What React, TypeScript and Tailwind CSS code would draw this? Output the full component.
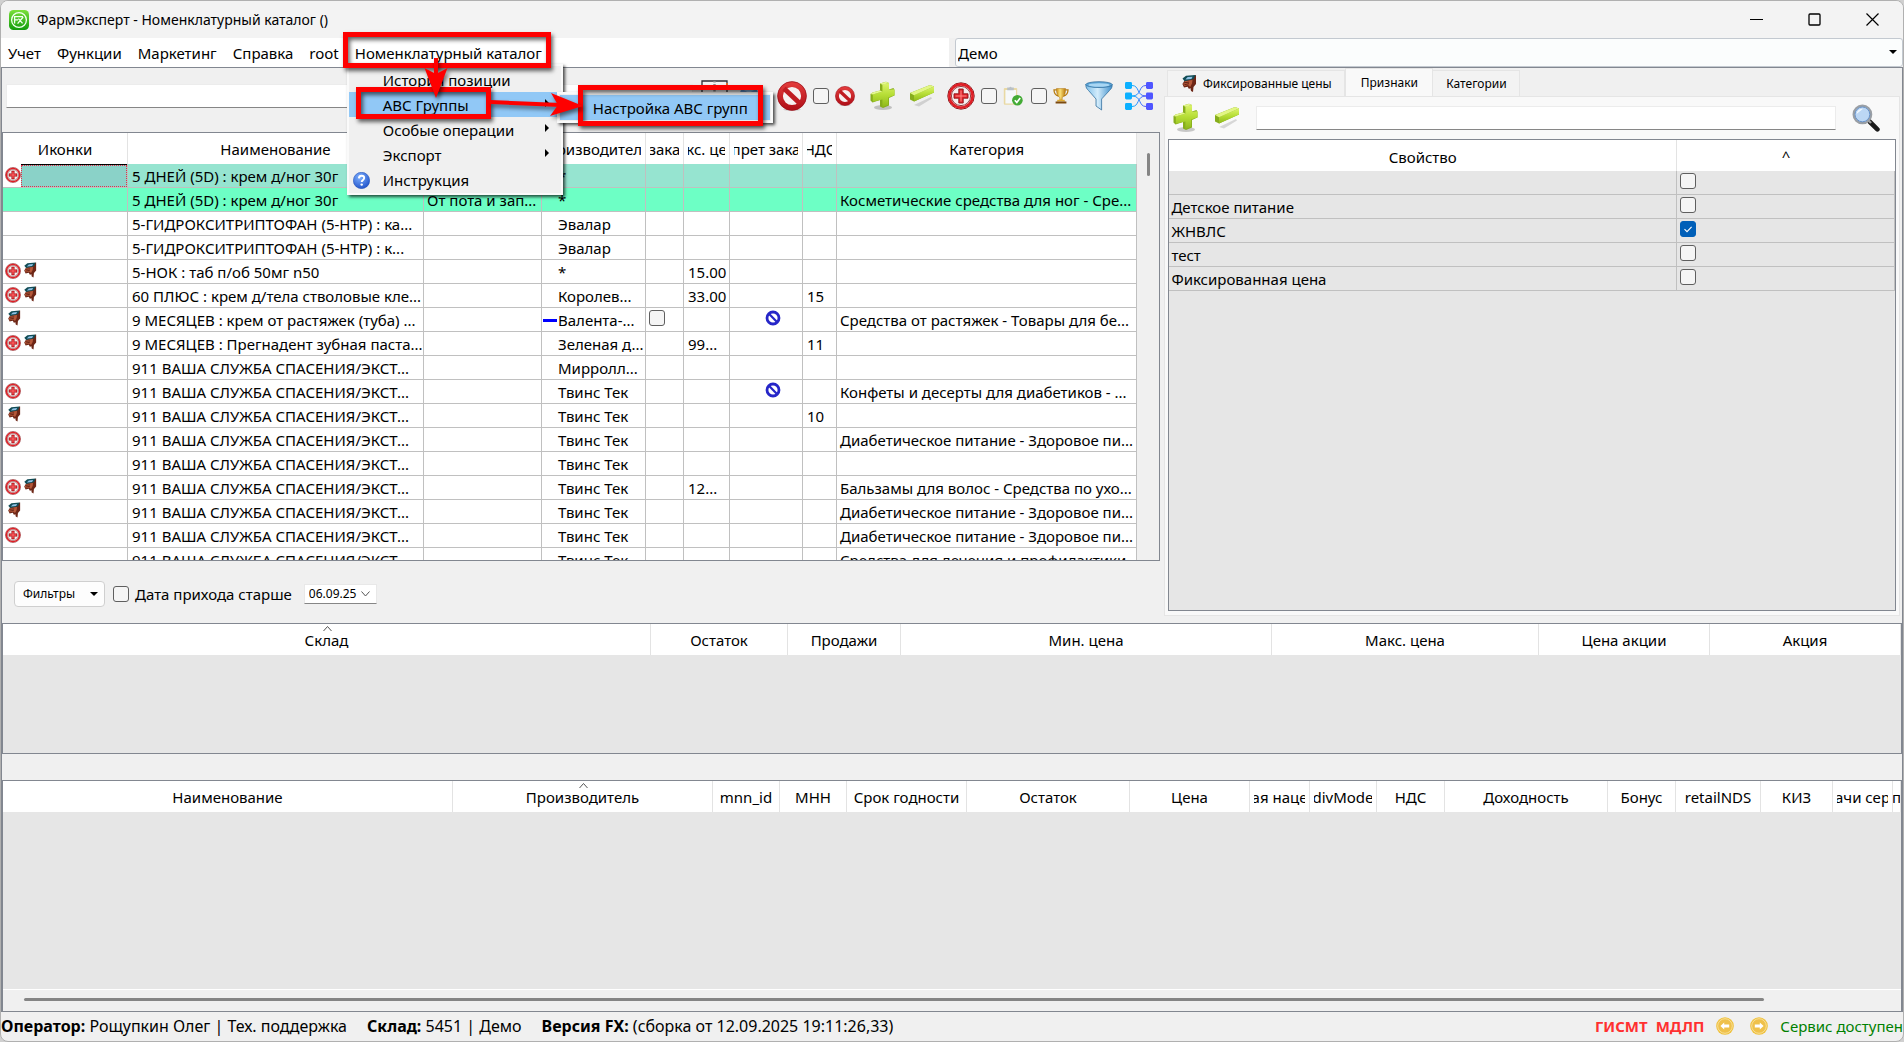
import type { ReactNode } from 'react';

function Defs() {
  return (
    <svg className="absolute h-0 w-0" aria-hidden="true">
      <defs>
        <linearGradient id="green" x1="0" y1="0" x2="0" y2="1">
          <stop offset="0" stopColor="#dcf46c" />
          <stop offset="0.5" stopColor="#b5dd35" />
          <stop offset="1" stopColor="#8fb81c" />
        </linearGradient>
        <linearGradient id="red" x1="0" y1="0" x2="0" y2="1">
          <stop offset="0" stopColor="#e0393a" />
          <stop offset="1" stopColor="#b3121a" />
        </linearGradient>
        <linearGradient id="logo" x1="0" y1="0" x2="0" y2="1">
          <stop offset="0" stopColor="#7be03a" />
          <stop offset="1" stopColor="#119c0c" />
        </linearGradient>
        <linearGradient id="gold" x1="0" y1="0" x2="1" y2="0">
          <stop offset="0" stopColor="#c98a12" />
          <stop offset="0.4" stopColor="#fbe27a" />
          <stop offset="1" stopColor="#b97708" />
        </linearGradient>
        <linearGradient id="blue" x1="0" y1="0" x2="1" y2="0">
          <stop offset="0" stopColor="#7fc0ea" />
          <stop offset="0.45" stopColor="#d3ecfb" />
          <stop offset="1" stopColor="#3f8fcb" />
        </linearGradient>
        <linearGradient id="tree" x1="0" y1="0" x2="1" y2="0">
          <stop offset="0" stopColor="#08b4ff" />
          <stop offset="1" stopColor="#5350ff" />
        </linearGradient>
        <radialGradient id="help" cx="0.4" cy="0.3" r="0.8">
          <stop offset="0" stopColor="#7fb2ff" />
          <stop offset="1" stopColor="#1749c4" />
        </radialGradient>
      </defs>
    </svg>
  );
}

const Logo = () => (
  <svg viewBox="0 0 20 20" className="size-5 shrink-0" aria-hidden="true">
    <rect width="20" height="20" rx="4.5" fill="url(#logo)" />
    <circle cx="10" cy="10" r="7.4" fill="none" stroke="#f2fff0" strokeWidth="1.3" />
    <path d="M5.6 13.6V6.6H10M5.6 9.8H9M8.6 13.6L14.2 7M9.4 8.6L13.6 13.4M8 6.6H14" fill="none" stroke="#f2fff0" strokeWidth="1.3" />
  </svg>
);

const NoEntry = ({ className }: { className: string }) => (
  <svg viewBox="0 0 30 30" className={className} aria-hidden="true">
    <ellipse cx="15" cy="28.6" rx="9" ry="1.2" fill="#0002" />
    <circle cx="15" cy="15" r="11.8" fill="#f6f1f1" stroke="url(#red)" strokeWidth="5.4" />
    <path d="M7 7.5L23 22.5" stroke="#c01c22" strokeWidth="5" />
    <circle cx="15" cy="15" r="14.4" fill="none" stroke="#96101a" strokeWidth="0.7" />
  </svg>
);

const Plus = () => (
  <svg viewBox="0 0 26 30" className="h-[30px] w-[26px] shrink-0" aria-hidden="true">
    <ellipse cx="14" cy="26.5" rx="9" ry="2.6" fill="#0003" />
    <path d="M11 2.5L17 0.8L20 2V8.5L24.5 7L25.5 9V14.5L20 17V24.5L14 27L11 25.5V19L3.5 21.5L1.5 19.5V13L3.5 11.5L11 9.5Z" fill="#86ad1c" />
    <path d="M13.4 3.6L20 2V8.8L25.5 8.2V14.2L19.2 16.6V24L13.4 26V18.4L3.8 20.8V13.4L13.4 10.4Z" fill="url(#green)" />
    <path d="M11 2.5L17 0.8L20 2L13.4 3.8ZM1.5 13L3.5 11.5L11 9.4L13.4 10.4L3.8 13.5Z" fill="#e4f78e" />
  </svg>
);

const Minus = () => (
  <svg viewBox="0 0 26 24" className="h-6 w-[26px] shrink-0" aria-hidden="true">
    <path d="M5 21L22 13L23 14.5L10 22.5Z" fill="#0002" />
    <path d="M1 9L21 1L25 2.5V8.5L5 17.5L1 15.5Z" fill="#86ad1c" />
    <path d="M5 11.2L25 2.5V8.5L5 17.5Z" fill="url(#green)" />
    <path d="M1 9L21 1L25 2.5L5 11.2Z" fill="#e2f684" />
  </svg>
);

const Med = ({ className }: { className: string }) => (
  <svg viewBox="0 0 28 28" className={className} aria-hidden="true">
    <circle cx="14" cy="14" r="13.2" fill="#fff" stroke="#7e1417" strokeWidth="1" />
    <circle cx="14" cy="14" r="11.6" fill="#f5e2e2" stroke="#df1f26" strokeWidth="2.6" />
    <circle cx="14" cy="14" r="9.6" fill="#f4f0f0" stroke="#7e1417" strokeWidth="0.8" />
    <path d="M11.8 7H16.2V11.8H21V16.2H16.2V21H11.8V16.2H7V11.8H11.8Z" fill="#e3242b" stroke="#8f1518" strokeWidth="0.9" />
    <path d="M14 8.5V19.5M8.5 14H19.5" stroke="#ff8d8a" strokeWidth="1" />
  </svg>
);

const Hand = ({ className }: { className: string }) => (
  <svg viewBox="0 0 16 18" className={className} aria-hidden="true">
    <path d="M11.5 1.5L15 0.5V9.5L12.5 12.5L12 17.5L10 16.5L9.4 13.5L8 14.6L6.6 12.2L3 13L1.4 9.6L3.6 6Z" fill="#6d2616" />
    <path d="M4 6.5L11.5 5.5L11 9L9.2 12.4L7 10.6L3.4 11.6L2.2 9.6Z" fill="#b6593a" />
    <path d="M3 8.3L8.2 7.6M3.4 10.2L8 9.2" stroke="#5a1c10" strokeWidth="0.9" />
    <path d="M1.5 4L5 1.2L14.6 0.4L12.6 4.6L3.6 6.8Z" fill="#114c55" />
    <path d="M4.4 5L6.6 2.6L11.6 2.2L10.4 4.4Z" fill="#8fc1e6" />
  </svg>
);

const Trophy = () => (
  <svg viewBox="0 0 16 16" className="size-4 shrink-0" aria-hidden="true">
    <path d="M3.5 1.8H1C1 5.4 2.4 7.4 5.4 8M12.5 1.8H15C15 5.4 13.6 7.4 10.6 8" fill="none" stroke="#b77c10" strokeWidth="1.3" />
    <path d="M3.4 0.6H12.6C12.6 5 11.6 8.4 9.2 9.6V12H6.8V9.6C4.4 8.4 3.4 5 3.4 0.6Z" fill="url(#gold)" stroke="#a86c08" strokeWidth="0.5" />
    <path d="M4.4 11.8H11.6L12 13.6H4Z" fill="#e0ac32" />
    <path d="M2.6 13.4H13.4V15.6H2.6Z" fill="#7c4a10" />
  </svg>
);

const Clipboard = () => (
  <svg viewBox="0 0 20 20" className="size-5 shrink-0" aria-hidden="true">
    <rect x="0.8" y="2" width="13.4" height="16.8" rx="1" fill="#e9d9a4" />
    <path d="M2.4 4H13V15L10.6 17.4H2.4Z" fill="#f6f8fa" />
    <path d="M4.2 1.6H6.4C6.6 0.4 8.4 0.4 8.6 1.6H10.8V4.2H4.2Z" fill="#b9c0c6" />
    <circle cx="14.4" cy="14.2" r="5.3" fill="#43ab35" />
    <path d="M11.8 14.2L13.8 16.4L17.2 12" fill="none" stroke="#fff" strokeWidth="1.7" />
  </svg>
);

const Funnel = () => (
  <svg viewBox="0 0 28 30" className="h-[30px] w-7 shrink-0" aria-hidden="true">
    <path d="M0.8 3.5C0.8 7 2 8 3.6 9.6L11 18V25L16.6 29V18L24.4 9.6C26 8 27.2 7 27.2 3.5Z" fill="url(#blue)" stroke="#35719f" strokeWidth="0.8" />
    <ellipse cx="14" cy="3.6" rx="13.2" ry="2.9" fill="#5da6d8" stroke="#35719f" strokeWidth="0.8" />
    <ellipse cx="14" cy="4" rx="10.6" ry="1.8" fill="#a9d6f3" />
  </svg>
);

const Tree = () => (
  <svg viewBox="0 0 28 28" className="size-7 shrink-0" aria-hidden="true">
    <path d="M7 3.5C15 3.5 11 14 21 14M7 24.5C15 24.5 11 14 21 14M21 3.5C13 3.5 17 14 7 14M21 24.5C13 24.5 17 14 7 14" fill="none" stroke="url(#tree)" strokeWidth="1" />
    {[0, 10.5, 21].map((y) => (
      <g key={y}>
        <rect x="0" y={y} width="7" height="7" rx="1.4" fill="#0bb0ff" />
        <rect x="21" y={y} width="7" height="7" rx="1.4" fill="#4f55ff" />
      </g>
    ))}
  </svg>
);

const Book = () => (
  <svg viewBox="0 0 28 28" className="size-7 shrink-0" aria-hidden="true">
    <path d="M1 1H26V26H1Z" fill="#f4f4f4" stroke="#2c2c34" strokeWidth="1.3" />
    <path d="M26 3V8" stroke="#e0672a" strokeWidth="2" />
    <path d="M13.5 1V26" stroke="#8b8b8b" strokeWidth="2.4" strokeDasharray="1.5 1.5" />
  </svg>
);

const Person = () => (
  <svg viewBox="0 0 28 28" className="size-7 shrink-0" aria-hidden="true">
    <circle cx="12" cy="12" r="9" fill="#5f92c9" />
    <path d="M5 7C8 2 16 2 19 7L12 11Z" fill="#8db7e0" />
  </svg>
);

const Magnifier = () => (
  <svg viewBox="0 0 28 28" className="size-7 shrink-0" aria-hidden="true">
    <path d="M17.5 17.5L25.4 25.4" stroke="#1b1b1b" strokeWidth="4.6" strokeLinecap="round" />
    <path d="M16 16L19 19" stroke="#9c9c9c" strokeWidth="2.4" />
    <circle cx="10.4" cy="10.4" r="8.8" fill="#cfe3f7" stroke="#9a9fa5" strokeWidth="2.2" />
    <circle cx="10.4" cy="10.4" r="7.4" fill="#bcd7f4" stroke="#4f7fbd" strokeWidth="0.8" />
    <path d="M4.6 10C5 6.4 8 4.6 11 4.8C9 6.6 7 8 4.6 10Z" fill="#f2f8fe" />
  </svg>
);

const HelpBall = () => (
  <svg viewBox="0 0 17 17" className="size-[17px]" aria-hidden="true">
    <circle cx="8.5" cy="8.5" r="8.2" fill="url(#help)" stroke="#1c4db5" strokeWidth="0.5" />
    <path d="M5.9 6.4C6 4.6 7.2 3.8 8.6 3.8C10.1 3.8 11.2 4.7 11.2 6.1C11.2 7.9 8.7 7.9 8.7 10" fill="none" stroke="#fff" strokeWidth="1.9" />
    <circle cx="8.7" cy="12.6" r="1.2" fill="#fff" />
  </svg>
);

const Ban = () => (
  <svg viewBox="0 0 16 16" className="size-4" aria-hidden="true">
    <circle cx="8" cy="8" r="6" fill="#fff" stroke="#2626c8" strokeWidth="2.8" />
    <path d="M4.2 4L12 12" stroke="#2626c8" strokeWidth="2.2" />
  </svg>
);

const ArrowBall = ({ flip = false }: { flip?: boolean }) => (
  <svg viewBox="0 0 18 18" className="size-[18px] shrink-0" aria-hidden="true">
    <circle cx="9" cy="9" r="8.8" fill="#efc03a" />
    <circle cx="9" cy="9" r="7.3" fill="#efc14a" stroke="#f8e2a0" strokeWidth="0.9" />
    <path
      d={flip ? 'M13.6 9L9.8 5.6V7.6H4.8V10.4H9.8V12.4Z' : 'M4.4 9L8.2 5.6V7.6H13.2V10.4H8.2V12.4Z'}
      fill="#fff"
    />
  </svg>
);

const Caret = ({ className = '' }: { className?: string }) => (
  <svg viewBox="0 0 8 4" className={'h-1 w-2 ' + className} aria-hidden="true">
    <path d="M0 0H8L4 4Z" fill="#000" />
  </svg>
);

const SubArrow = () => (
  <svg viewBox="0 0 4 8" className="mb-1 h-2 w-1" aria-hidden="true">
    <path d="M0 0L4 4L0 8Z" fill="#000" />
  </svg>
);

const SortMark = () => (
  <svg viewBox="0 0 9 5" className="absolute top-0.5 left-1/2 -ml-1 h-[5px] w-[9px]" aria-hidden="true">
    <path d="M0.5 5L4.5 0.5L8.5 5" fill="none" stroke="#555" />
  </svg>
);

function Check({ label, checked = false }: { label: string; checked?: boolean }) {
  return (
    <span className="relative block size-4 shrink-0">
      <input
        type="checkbox"
        aria-label={label}
        defaultChecked={checked}
        className="peer block size-4 appearance-none rounded-[3px] border border-[#5f5f5f] bg-[#f5f5f5] checked:border-[#005fb8] checked:bg-[#005fb8]"
      />
      <svg viewBox="0 0 16 16" className="pointer-events-none absolute inset-0 hidden size-4 peer-checked:block" aria-hidden="true">
        <path d="M4.5 8.2L7 10.6L11.6 5.8" fill="none" stroke="#fff" strokeWidth="1.1" />
      </svg>
    </span>
  );
}

const IconButton = ({ label, className = '', children }: { label: string; className?: string; children: ReactNode }) => (
  <button type="button" aria-label={label} className={'shrink-0 ' + className}>
    {children}
  </button>
);

type Row = {
  icons?: string;
  name: string;
  desc?: string;
  maker: string;
  dash?: boolean;
  box?: boolean;
  price?: string;
  ban?: boolean;
  vat?: string;
  category?: string;
};

const rescue = '911 ВАША СЛУЖБА СПАСЕНИЯ/ЭКСТ...';
const diabetic = 'Диабетическое питание - Здоровое пи...';

const rows: Row[] = [
  { icons: 'm', name: '5 ДНЕЙ (5D) : крем д/ног 30г', maker: '*' },
  { name: '5 ДНЕЙ (5D) : крем д/ног 30г', desc: 'От пота и зап...', maker: '*', category: 'Косметические средства для ног - Сре...' },
  { name: '5-ГИДРОКСИТРИПТОФАН (5-HTP) : ка...', maker: 'Эвалар' },
  { name: '5-ГИДРОКСИТРИПТОФАН (5-HTP) : к...', maker: 'Эвалар' },
  { icons: 'mh', name: '5-НОК : таб п/об 50мг n50', maker: '*', price: '15.00' },
  { icons: 'mh', name: '60 ПЛЮС : крем д/тела стволовые кле...', maker: 'Королев...', price: '33.00', vat: '15' },
  { icons: 'h', name: '9 МЕСЯЦЕВ : крем от растяжек (туба) ...', maker: 'Валента-...', dash: true, box: true, ban: true, category: 'Средства от растяжек - Товары для бе...' },
  { icons: 'mh', name: '9 МЕСЯЦЕВ : Прегнадент зубная паста...', maker: 'Зеленая д...', price: '99...', vat: '11' },
  { name: rescue, maker: 'Мирролл...' },
  { icons: 'm', name: rescue, maker: 'Твинс Тек', ban: true, category: 'Конфеты и десерты для диабетиков - ...' },
  { icons: 'h', name: rescue, maker: 'Твинс Тек', vat: '10' },
  { icons: 'm', name: rescue, maker: 'Твинс Тек', category: diabetic },
  { name: rescue, maker: 'Твинс Тек' },
  { icons: 'mh', name: rescue, maker: 'Твинс Тек', price: '12...', category: 'Бальзамы для волос - Средства по ухо...' },
  { icons: 'h', name: rescue, maker: 'Твинс Тек', category: diabetic },
  { icons: 'm', name: rescue, maker: 'Твинс Тек', category: diabetic },
  { name: rescue, maker: 'Твинс Тек', category: 'Средства для лечения и профилактики...' },
];

type Column = { title: string; width?: string; sorted?: boolean; narrow?: boolean };

const catalogColumns: Column[] = [
  { title: 'Иконки', width: 'w-[125px]' },
  { title: 'Наименование', width: 'w-[296px]' },
  { title: '', width: 'w-[118px]' },
  { title: 'Производитель', width: 'w-[104px]' },
  { title: 'зака', width: 'w-[38px]' },
  { title: 'кс. це', width: 'w-[46px]' },
  { title: 'прет зака', width: 'w-[73px]' },
  { title: 'НДС', width: 'w-[34px]' },
  { title: 'Категория' },
];

const stockColumns: Column[] = [
  { title: 'Склад', sorted: true },
  { title: 'Остаток', width: 'w-[137px]' },
  { title: 'Продажи', width: 'w-[113px]' },
  { title: 'Мин. цена', width: 'w-[371px]' },
  { title: 'Макс. цена', width: 'w-[267px]' },
  { title: 'Цена акции', width: 'w-[171px]' },
  { title: 'Акция', width: 'w-[191px]' },
];

const batchColumns: Column[] = [
  { title: 'Наименование' },
  { title: 'Производитель', width: 'w-[260px]', sorted: true },
  { title: 'mnn_id', width: 'w-[67px]' },
  { title: 'МНН', width: 'w-[67px]' },
  { title: 'Срок годности', width: 'w-[120px]' },
  { title: 'Остаток', width: 'w-[163px]' },
  { title: 'Цена', width: 'w-[120px]' },
  { title: 'ая наце', width: 'w-[60px]' },
  { title: 'divMode', width: 'w-[67px]' },
  { title: 'НДС', width: 'w-[68px]' },
  { title: 'Доходность', width: 'w-[163px]' },
  { title: 'Бонус', width: 'w-[68px]' },
  { title: 'retailNDS', width: 'w-[85px]' },
  { title: 'КИЗ', width: 'w-[72px]' },
  { title: 'ачи сер', width: 'w-[60px]' },
  { title: 'п', width: 'w-2', narrow: true },
];

function HeaderRow({ columns }: { columns: Column[] }) {
  return (
    <thead>
      <tr className="h-[31px] bg-white">
        {columns.map((c, i) => (
          <th key={i} scope="col" className={'relative border-r border-[#e3e3e3] p-0 font-normal ' + (c.width ?? '')}>
            {c.sorted && <SortMark />}
            <span className={'flex justify-center overflow-hidden pt-px leading-6 whitespace-nowrap ' + (c.narrow ? '' : 'mx-1')}>
              <span className="shrink-0">{c.title}</span>
            </span>
          </th>
        ))}
      </tr>
    </thead>
  );
}

const cell = 'h-6 overflow-hidden border-r border-b border-[#c0c0c0] p-0 leading-[22px] whitespace-nowrap';

function Catalog() {
  return (
    <div className="flex h-[429px] border border-[#828790] bg-[#f0f0f0]">
      <div className="min-w-0 flex-1 overflow-hidden bg-white">
        <table className="w-full table-fixed border-separate border-spacing-0">
          <HeaderRow columns={catalogColumns} />
          <tbody>
            {rows.map((r, i) => (
              <tr key={i} className={i === 0 ? 'bg-[#96e4d0]' : i === 1 ? 'bg-[#6dffc5]' : 'bg-white'}>
                <td className={cell + (i === 0 ? ' bg-white' : '')}>
                  <div className="flex h-[23px] items-center pl-0.5">
                    {r.icons?.includes('m') && <Med className="mb-0.5 size-4 shrink-0" />}
                    {r.icons?.includes('h') && <Hand className="mb-1 ml-0.5 h-4 w-[14px] shrink-0" />}
                    {i === 0 && (
                      <span className="h-full flex-1 border-t border-black bg-[#8ad2c8]">
                        <span className="block h-full border border-dotted border-[#e0304a]" />
                      </span>
                    )}
                  </div>
                </td>
                <td className={cell + ' pt-px pl-1'}>{r.name}</td>
                <td className={cell + ' pt-px pl-[3px]'}>{r.desc}</td>
                <td className={cell + ' pt-px'}>
                  <div className="flex items-center">
                    <span className={'mr-px ml-px h-[3px] w-[14px] shrink-0 ' + (r.dash ? 'bg-[#0000ff]' : '')} />
                    {r.maker}
                  </div>
                </td>
                <td className={cell}>
                  {r.box && (
                    <span className="block pb-1 pl-[3px]">
                      <Check label="Дозаказ" />
                    </span>
                  )}
                </td>
                <td className={cell + ' pt-px pl-1'}>{r.price}</td>
                <td className={cell}>
                  {r.ban && (
                    <span className="flex justify-center pb-1 pl-3.5">
                      <Ban />
                    </span>
                  )}
                </td>
                <td className={cell + ' pt-px pl-1'}>{r.vat}</td>
                <td className={cell + ' pt-px pl-[3px]'}>{r.category}</td>
              </tr>
            ))}
          </tbody>
        </table>
      </div>
      <div className="flex w-[22px] justify-center pt-5">
        <div className="h-[23px] w-[3px] rounded-full bg-[#858585]" />
      </div>
    </div>
  );
}

const traits = [
  { name: '', on: false },
  { name: 'Детское питание', on: false },
  { name: 'ЖНВЛС', on: true },
  { name: 'тест', on: false },
  { name: 'Фиксированная цена', on: false },
];

function SidePanel() {
  return (
    <section className="flex flex-col pr-0.5 pb-[7px]">
      <div role="tablist" className="flex items-end pl-[3px] text-xs">
        <button type="button" role="tab" className="flex h-[26px] w-[178px] items-center justify-center gap-1.5 border border-b-0 border-[#e5e5e5] bg-[#f3f3f3]">
          <Hand className="h-[19px] w-4" />
          Фиксированные цены
        </button>
        <button type="button" role="tab" aria-selected="true" className="h-7 w-[88px] border border-b-0 border-[#e5e5e5] bg-[#f9f9f9]">
          Признаки
        </button>
        <button type="button" role="tab" className="h-[26px] w-[87px] border border-b-0 border-l-0 border-[#e5e5e5] bg-[#f3f3f3]">
          Категории
        </button>
      </div>
      <div className="flex flex-1 flex-col border border-[#e5e5e5] bg-[#f9f9f9] px-[3px] pb-1">
        <div className="flex h-[42px] items-center pr-4 pl-1">
          <IconButton label="Добавить признак">
            <Plus />
          </IconButton>
          <IconButton label="Удалить признак" className="ml-4">
            <Minus />
          </IconButton>
          <input aria-label="Поиск признака" className="ml-4 h-6 min-w-0 flex-1 border border-[#ececec] border-b-[#868686] bg-white px-1 outline-none" />
          <IconButton label="Найти" className="ml-4">
            <Magnifier />
          </IconButton>
        </div>
        <div className="flex-1 border border-[#828790] bg-[#e6e6e6]">
          <table className="w-full table-fixed border-separate border-spacing-0">
            <thead>
              <tr className="h-[31px] bg-white">
                <th scope="col" className="border-r border-[#e3e3e3] p-0 pt-0.5 font-normal">
                  Свойство
                </th>
                <th scope="col" className="w-[218px] p-0 font-normal">
                  ^
                </th>
              </tr>
            </thead>
            <tbody>
              {traits.map((p) => (
                <tr key={p.name}>
                  <td className={cell + ' pt-px pl-0.5'}>{p.name}</td>
                  <td className={cell}>
                    <span className="block pb-1 pl-[3px]">
                      <Check label={p.name || 'Без названия'} checked={p.on} />
                    </span>
                  </td>
                </tr>
              ))}
            </tbody>
          </table>
        </div>
      </div>
    </section>
  );
}

function Toolbar() {
  return (
    <div className="flex h-16 items-center pr-[7px] pb-2 pl-1">
      <input aria-label="Поиск" className="h-6 min-w-0 flex-1 border border-[#ececec] border-b-[#868686] bg-white px-1 outline-none" />
      <IconButton label="Справочник" className="mb-1 ml-2">
        <Book />
      </IconButton>
      <IconButton label="Контрагент" className="ml-2">
        <Person />
      </IconButton>
      <IconButton label="Запретить" className="ml-3">
        <NoEntry className="size-[30px]" />
      </IconButton>
      <span className="mr-1.5 ml-1.5 flex">
        <Check label="Только запрещённые" />
      </span>
      <NoEntry className="size-5 shrink-0" />
      <IconButton label="Добавить" className="ml-3.5">
        <Plus />
      </IconButton>
      <IconButton label="Удалить" className="ml-3.5">
        <Minus />
      </IconButton>
      <IconButton label="Аптека" className="ml-3">
        <Med className="size-7" />
      </IconButton>
      <span className="mr-1.5 ml-1.5 flex">
        <Check label="Проверенные" />
      </span>
      <Clipboard />
      <span className="mr-1.5 ml-2 flex">
        <Check label="Лидеры" />
      </span>
      <Trophy />
      <IconButton label="Фильтр" className="ml-4">
        <Funnel />
      </IconButton>
      <IconButton label="Дерево" className="ml-3">
        <Tree />
      </IconButton>
    </div>
  );
}

const menuItems = [
  { label: 'История позиции' },
  { label: 'АВС Группы', sub: true, active: true },
  { label: 'Особые операции', sub: true },
  { label: 'Экспорт', sub: true },
  { label: 'Инструкция', help: true },
];

const frame = 'pointer-events-none absolute border-[5px] border-[#fe0000] shadow-[2px_3px_4px_rgba(0,0,0,0.6),inset_2px_3px_4px_rgba(0,0,0,0.6)]';

function CatalogMenu() {
  return (
    <div className="relative">
      <button type="button" aria-haspopup="menu" aria-expanded="true">
        Номенклатурный каталог
      </button>
      <div className="absolute top-[21px] -left-2 z-10">
        <ul role="menu" className="w-[216px] border-2 border-[#fafafa] bg-[#f0f0f0] py-px shadow-[2px_2px_3px_rgba(0,0,0,0.7)]">
          {menuItems.map((m) => (
            <li key={m.label} role="none">
              <button
                type="button"
                role="menuitem"
                className={'flex h-[25px] w-full items-center pt-0.5 ' + (m.active ? 'bg-[#91c8f6]' : '')}
              >
                <span className="flex h-full w-[34px] shrink-0 items-center pl-1">{m.help && <HelpBall />}</span>
                <span className="flex-1 text-left whitespace-nowrap">{m.label}</span>
                <span className="w-4">{m.sub && <SubArrow />}</span>
              </button>
            </li>
          ))}
        </ul>
        <div role="menu" className="absolute top-7 left-[210px] w-[216px] border-2 border-[#fafafa] bg-[#f0f0f0] p-px shadow-[2px_2px_3px_rgba(0,0,0,0.7)]">
          <button type="button" role="menuitem" className="h-[25px] w-full bg-[#91c8f6] pt-0.5 pl-[33px] text-left whitespace-nowrap">
            Настройка АВС групп
          </button>
        </div>
        <span className={frame + ' top-[23px] left-[9px] h-8 w-[135px]'} />
        <span className={frame + ' top-[21px] left-[231px] h-[41px] w-[185px]'} />
        <span className={frame + ' -top-8 -left-1 h-9 w-[208px]'} />
        <svg viewBox="0 0 250 70" className="pointer-events-none absolute -top-2 left-0 h-[70px] w-[250px] drop-shadow-[2px_3px_2px_rgba(0,0,0,0.55)]" aria-hidden="true">
          <path d="M89 2L89 22" stroke="#fe0000" strokeWidth="4" />
          <path d="M89 42L77.500 12L89 18L100.500 12Z" fill="#fe0000" />
          <path d="M143 46L214 49" stroke="#fe0000" strokeWidth="4" />
          <path d="M236 50L204 37L211 49L203 60Z" fill="#fe0000" />
        </svg>
      </div>
    </div>
  );
}

export default function App() {
  return (
    <div className="bg-[#d0d0d0] font-['Noto_Sans','Open_Sans',sans-serif] text-[15px] leading-5 text-black">
      <Defs />
      <div className="flex min-h-screen flex-col overflow-hidden rounded-lg border border-[#b0b0b0] bg-[#f0f0f0]">
        <header className="flex h-[37px] shrink-0 items-center bg-[#f3f3f3] pl-2 text-sm">
          <Logo />
          <h1 className="ml-2 flex-1">ФармЭксперт - Номенклатурный каталог ()</h1>
          <div className="flex items-center pr-0.5">
            <button type="button" aria-label="Свернуть" className="flex w-[58px] justify-center">
              <svg viewBox="0 0 13 13" className="size-[13px]"><path d="M0 6.500H13" stroke="#000" /></svg>
            </button>
            <button type="button" aria-label="Развернуть" className="flex w-[58px] justify-center">
              <svg viewBox="0 0 13 13" className="size-[13px]"><rect x="1" y="1" width="11" height="11" rx="1" fill="none" stroke="#000" strokeWidth="1.300" /></svg>
            </button>
            <button type="button" aria-label="Закрыть" className="flex w-[58px] justify-center">
              <svg viewBox="0 0 13 13" className="size-[13px]"><path d="M0.500 0.500L12.500 12.500M12.500 0.500L0.500 12.500" stroke="#000" strokeWidth="1.200" /></svg>
            </button>
          </div>
        </header>

        <div className="grid h-[29px] shrink-0 grid-cols-[948fr_948fr] gap-1.5">
          <nav className="flex items-center gap-4 bg-white pl-[7px]">
            <button type="button">Учет</button>
            <button type="button">Функции</button>
            <button type="button">Маркетинг</button>
            <button type="button">Справка</button>
            <button type="button">root</button>
            <CatalogMenu />
          </nav>
          <div className="relative">
            <select aria-label="Склад" className="h-full w-full appearance-none rounded-[3px] border border-[#c3c9d0] bg-[#fbfdfd] pl-0.5 outline-none">
              <option>Демо</option>
            </select>
            <Caret className="absolute top-3 right-1.5" />
          </div>
        </div>

        <main className="flex flex-1 flex-col border-x border-t border-[#828790]">
          <div className="grid grid-cols-[1159fr_738fr] gap-1">
            <section>
              <Toolbar />
              <Catalog />
              <div className="flex h-[62px] items-center pt-1 pl-3">
                <button type="button" className="flex h-[26px] w-[91px] items-center justify-between rounded border border-[#cfcfcf] bg-[#fdfdfd] pr-1.5 pl-2 text-xs">
                  <span>Фильтры</span>
                  <Caret />
                </button>
                <label className="ml-2 flex items-center gap-1.5">
                  <Check label="Дата прихода старше" />
                  Дата прихода старше
                </label>
                <span className="ml-3 flex h-5 w-[73px] items-center border border-[#e8e8e8] border-b-[#868686] bg-white text-xs">
                  <input aria-label="Дата" defaultValue="06.09.25" className="w-14 pl-1 outline-none" />
                  <svg viewBox="0 0 9 6" className="h-1.5 w-[9px]" aria-hidden="true"><path d="M0.500 0.500L4.500 5L8.500 0.500" fill="none" stroke="#555" /></svg>
                </span>
              </div>
            </section>
            <SidePanel />
          </div>

          <div className="h-[131px] shrink-0 border border-[#828790] bg-[#e6e6e6]">
            <table className="w-full table-fixed border-separate border-spacing-0">
              <HeaderRow columns={stockColumns} />
            </table>
          </div>

          <div className="mt-[26px] flex flex-1 flex-col border border-[#828790] bg-[#e6e6e6]">
            <div className="flex-1 overflow-hidden">
              <table className="w-full table-fixed border-separate border-spacing-0">
                <HeaderRow columns={batchColumns} />
              </table>
            </div>
            <div className="h-[22px] border-t border-white bg-[#f0f0f0] pt-2 pr-[137px] pl-[21px]">
              <div className="h-[3px] rounded-full bg-[#858585]" />
            </div>
          </div>
        </main>

        <footer className="flex h-[29px] shrink-0 items-center pb-px">
          <p className="flex-1 text-base whitespace-nowrap">
            <span className="mr-5"><b>Оператор:</b> Рощупкин Олег | Тех. поддержка</span>
            <span className="mr-5"><b>Склад:</b> 5451 | Демо</span>
            <b>Версия FX:</b> (сборка от 12.09.2025 19:11:26,33)
          </p>
          <b className="text-[#ff3030]">ГИСМТ</b>
          <b className="ml-2 text-[#ff3030]">МДЛП</b>
          <IconButton label="Назад" className="ml-3"><ArrowBall /></IconButton>
          <IconButton label="Вперёд" className="ml-4"><ArrowBall flip /></IconButton>
          <span className="ml-3 text-[#008000]">Сервис доступен</span>
        </footer>
      </div>
    </div>
  );
}
